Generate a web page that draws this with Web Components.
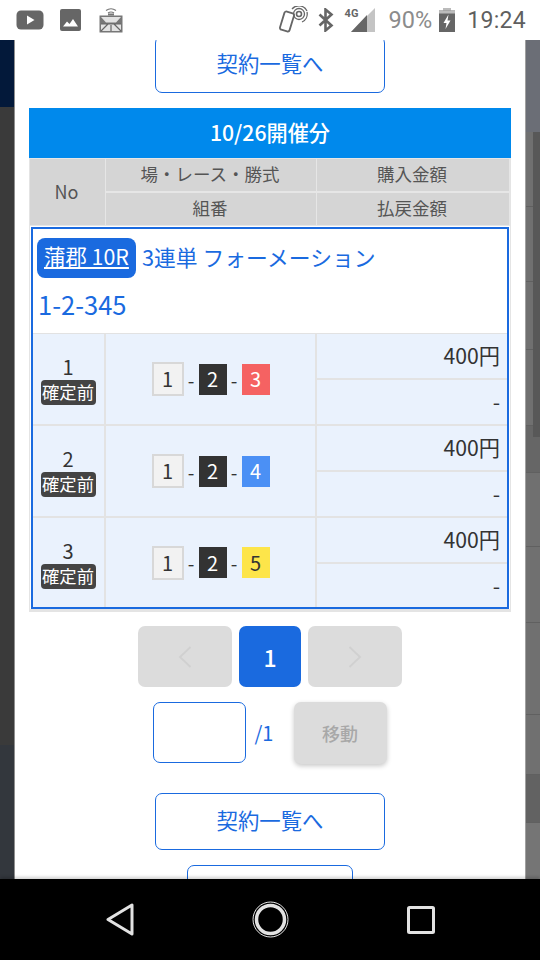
<!DOCTYPE html>
<html lang="ja">
<head>
<meta charset="utf-8">
<title>契約一覧</title>
<style>
html,body{margin:0;padding:0;background:#000;}
body{width:540px;height:960px;overflow:hidden;display:flex;flex-direction:column;font-family:"Noto Sans CJK JP","Noto Sans",sans-serif;}
</style>
</head>
<body>
<status-bar></status-bar>
<modal-screen>
  <action-button style="margin-top:-4px">契約一覧へ</action-button>
  <bet-panel heading="10/26開催分">
    <bet-card venue="蒲郡 10R" kind="3連単 フォーメーション" combo="1-2-345">
      <bet-row no="1" second="2" third="3" amount="400円"></bet-row>
      <bet-row no="2" second="2" third="4" amount="400円"></bet-row>
      <bet-row no="3" second="2" third="5" amount="400円" last></bet-row>
    </bet-card>
  </bet-panel>
  <pager-bar></pager-bar>
  <action-button style="margin-top:29px">契約一覧へ</action-button>
  <action-button narrow style="margin-top:15px"></action-button>
</modal-screen>
<nav-bar></nav-bar>

<script>
const statusTpl = document.createElement('template');
statusTpl.innerHTML = `
<style>
:host{display:flex;flex:0 0 40px;height:40px;background:#fff;align-items:center;justify-content:space-between;padding:0 14px 0 16px;box-sizing:border-box;color:#666;overflow:hidden;position:relative;z-index:1;}
.left,.right{display:flex;align-items:center;}
.right{font-family:Roboto,sans-serif;font-size:23.500px;}
svg{display:block;}
.pct{color:#8c8c8c;margin-left:14px;}
.clock{margin-left:12px;color:#5f5f5f;font-size:23px;letter-spacing:.3px;}
</style>
<div class="left">
  <svg width="28" height="20" viewBox="0 0 28 20"><rect x="0.500" y="0.500" width="27" height="19" rx="4.500" fill="#666"/><path d="M11 5.500v9l7.500-4.500z" fill="#fff"/></svg>
  <svg style="margin-left:16px" width="21" height="22" viewBox="0 0 21 22"><rect width="21" height="22" rx="2" fill="#666"/><path d="M3 17.500l4-5 2.500 2.500 3.500-5 5 7.500z" fill="#fff"/></svg>
  <svg style="margin-left:18px" width="24" height="26" viewBox="0 0 24 26"><path d="M7 3.500q5-3.500 10 0M9 6q3-2 6 0" fill="none" stroke="#777" stroke-width="1.200"/><rect x="9" y="6.500" width="6" height="2" fill="#777"/><rect x="0.500" y="8.500" width="23" height="17" fill="#777"/><path d="M2 10h20l-5 5.500h-10zM2 24v-7h20v7z" fill="#e2e2e2"/><path d="M2 24l7-7M22 24l-7-7M12 18v6M2 17h20" stroke="#666" stroke-width="1.200"/></svg>
</div>
<div class="right">
  <svg width="29" height="28" viewBox="0 0 29 28" fill="none" stroke="#666"><rect x="3" y="6" width="10" height="19" rx="2" stroke-width="1.800" transform="rotate(17 8 15.500)"/><circle cx="20" cy="8" r="2.500" stroke-width="1.600"/><circle cx="20" cy="8" r="5.500" stroke-width="1.300"/><path d="M13 3a9 9 0 0 1 15 2" stroke-width="1.300"/><path d="M28 6a9 9 0 0 1-5 10" stroke-width="1.300"/></svg>
  <svg style="margin-left:10px" width="16" height="24" viewBox="0 0 16 24" fill="none" stroke="#666" stroke-width="2.600"><path d="M1.500 6.500l12 11-6 5v-21l6 5-12 11"/></svg>
  <span style="display:flex;position:relative;width:30px;height:24px;margin-left:11px">
    <svg width="30" height="24" viewBox="0 0 30 24"><path d="M30 0v24H6z" fill="#c4c4c4"/><path d="M22 7v17H6z" fill="#666"/></svg>
    <span style="position:absolute;left:0;top:0;font-size:11px;font-weight:700;line-height:11px;color:#666">4G</span>
  </span>
  <span class="pct">90%</span>
  <svg style="margin-left:7px" width="16" height="24" viewBox="0 0 16 24"><rect x="4" y="0" width="8" height="3" fill="#bbb"/><rect y="2.500" width="16" height="21.500" fill="#666"/><rect y="2.500" width="16" height="3" fill="#bbb"/><path d="M9.500 6.500l-5 8.500h3l-1 6 5-8.500h-3z" fill="#fff"/></svg>
  <span class="clock">19:24</span>
</div>`;
class StatusBar extends HTMLElement{
  constructor(){
    super();
    this.attachShadow({mode:'open'}).appendChild(statusTpl.content.cloneNode(true));
  }
}

const modalTpl = document.createElement('template');
modalTpl.innerHTML = `
<style>
:host{display:flex;flex:0 0 839px;height:839px;overflow:hidden;position:relative;}
.strip{flex:0 0 14px;display:flex;flex-direction:column;position:relative;}
.left{border-right:1px solid #8f8f8f;}
.right{border-left:1px solid #a0a0a0;}
.left div:nth-child(1){flex:0 0 67px;background:#03193a;}
.left div:nth-child(2){flex:0 0 638px;background:#3a3a3a;}
.left div:nth-child(3){flex:1;background:#33373d;}
.right .band{border-bottom:1px solid #606060;background:#707070;}
.right .top{flex:0 0 92px;background:#6b6e76;border:0;}
.right .shade{position:absolute;left:7px;right:0;top:92px;height:305px;background:#585858;}
main{flex:1;min-width:0;background:#fff;display:flex;flex-direction:column;align-items:center;}
</style>
<div class="strip left"><div></div><div></div><div></div></div>
<main><slot></slot></main>
<div class="strip right">
  <div class="band top"></div>
  <div class="band" style="flex:0 0 74px"></div>
  <div class="band" style="flex:0 0 74px"></div>
  <div class="band" style="flex:0 0 67px"></div>
  <div class="band" style="flex:0 0 75px"></div>
  <div class="band" style="flex:0 0 46px;background:#666"></div>
  <div class="band" style="flex:0 0 73px"></div>
  <div class="band" style="flex:0 0 75px"></div>
  <div class="band" style="flex:0 0 91px"></div>
  <div class="band" style="flex:0 0 59px"></div>
  <div class="band" style="flex:0 0 47px;background:#626262"></div>
  <div class="band" style="flex:1;border:0;background:#757575"></div>
  <div class="shade"></div>
</div>`;
class ModalScreen extends HTMLElement{
  constructor(){
    super();
    this.attachShadow({mode:'open'}).appendChild(modalTpl.content.cloneNode(true));
  }
}

const buttonTpl = document.createElement('template');
buttonTpl.innerHTML = `
<style>
:host{display:flex;flex:none;box-sizing:border-box;width:230px;height:57px;border:1.500px solid #1a6adf;border-radius:7px;background:#fff;align-items:center;justify-content:center;color:#1a6adf;font-size:21.400px;line-height:1;padding-bottom:3px;}
:host([narrow]){width:166px;}
</style>
<slot></slot>`;
class ActionButton extends HTMLElement{
  constructor(){
    super();
    this.attachShadow({mode:'open'}).appendChild(buttonTpl.content.cloneNode(true));
  }
}

const panelTpl = document.createElement('template');
panelTpl.innerHTML = `
<style>
:host{display:block;flex:none;width:482px;margin-top:15px;box-sizing:border-box;border:solid #e4e4e4;border-width:0 1px 3px;}
h2{margin:0 -1px;height:50px;box-sizing:border-box;padding-bottom:3px;background:#0089ec;color:#fff;font-size:21.200px;font-weight:500;display:flex;align-items:center;justify-content:center;line-height:1;}
.head{display:grid;grid-template-columns:76px 211px 1fr;grid-template-rows:34px 34px;background:#e4e4e4;gap:0;font-size:17.500px;color:#555;}
.head div{background:#d5d5d5;display:flex;align-items:center;justify-content:center;box-sizing:border-box;padding:0 2px 2px 0;border:solid #e6e6e6;border-width:1px 1px 1px 0;line-height:1;}
.head .no{grid-row:1 / span 2;font-size:18px;}
</style>
<h2></h2>
<div class="head">
  <div class="no">No</div>
  <div>場・レース・勝式</div>
  <div>購入金額</div>
  <div>組番</div>
  <div>払戻金額</div>
</div>
<slot></slot>`;
class BetPanel extends HTMLElement{
  constructor(){
    super();
    this.attachShadow({mode:'open'}).appendChild(panelTpl.content.cloneNode(true));
    this.shadowRoot.querySelector('h2').textContent = this.getAttribute('heading');
  }
}

const cardTpl = document.createElement('template');
cardTpl.innerHTML = `
<style>
:host{display:block;box-sizing:border-box;margin:1px 1px 0;border:2.500px solid #1a6adf;background:#fff;}
.title{height:105px;box-sizing:border-box;padding:9px 0 0 4px;color:#1a6adf;border-bottom:1px solid #e2e2e2;font-size:21.800px;line-height:1;}
.line{display:flex;align-items:center;height:40px;gap:6px;}
a{display:block;background:#1a6adf;color:#fff;border-radius:8px;font-size:21.400px;padding:6px 7px;line-height:24px;height:40px;box-sizing:border-box;text-decoration:underline;text-underline-offset:2px;}
#kind{padding-bottom:3px;}
.combo{font-size:25.500px;margin-top:6px;height:40px;display:flex;align-items:center;padding-left:1px;}
</style>
<div class="title">
  <div class="line"><a id="venue"></a><span id="kind"></span></div>
  <div class="combo" id="combo"></div>
</div>
<slot></slot>`;
class BetCard extends HTMLElement{
  constructor(){
    super();
    this.attachShadow({mode:'open'}).appendChild(cardTpl.content.cloneNode(true));
    for(const key of ['venue','kind','combo']){
      this.shadowRoot.getElementById(key).textContent = this.getAttribute(key);
    }
  }
}

const rowTpl = document.createElement('template');
rowTpl.innerHTML = `
<style>
:host{display:grid;grid-template-columns:73px 211px 1fr;height:92px;background:#eaf2fd;color:#333;border-bottom:2px solid #e3e3e3;box-sizing:border-box;}
:host([last]){height:89px;border-bottom:0;}
.no{border-right:2px solid #e3e3e3;display:flex;flex-direction:column;align-items:center;justify-content:center;font-size:20px;line-height:26px;padding:1px 1px 0 0;}
.tag{background:#444;color:#fff;border-radius:4px;font-size:17.300px;line-height:24px;height:25px;width:55px;text-align:center;white-space:nowrap;}
.combo{border-right:2px solid #e3e3e3;display:flex;align-items:center;justify-content:center;gap:4px;}
.money{display:grid;grid-template-rows:46px 1fr;font-size:21.200px;}
.money div{display:flex;align-items:center;justify-content:flex-end;padding:0 7px 2px 0;line-height:1;box-sizing:border-box;}
.money div:first-child{border-bottom:2px solid #e3e3e3;}
.dash{font-size:19px;width:7px;text-align:center;}
</style>
<div class="no"><span id="no"></span><span class="tag">確定前</span></div>
<div class="combo"><boat-number n="1"></boat-number><span class="dash">-</span><boat-number id="second"></boat-number><span class="dash">-</span><boat-number id="third"></boat-number></div>
<div class="money"><div id="amount"></div><div>-</div></div>`;
class BetRow extends HTMLElement{
  constructor(){
    super();
    this.attachShadow({mode:'open'}).appendChild(rowTpl.content.cloneNode(true));
    const root = this.shadowRoot;
    root.getElementById('no').textContent = this.getAttribute('no');
    root.getElementById('amount').textContent = this.getAttribute('amount');
    root.getElementById('second').setAttribute('n', this.getAttribute('second'));
    root.getElementById('third').setAttribute('n', this.getAttribute('third'));
  }
}

const boatColors = {
  1:['#f2f2f2','#333'],
  2:['#333','#fff'],
  3:['#f56262','#fff'],
  4:['#4b90f5','#fff'],
  5:['#fde54a','#333']
};
class BoatNumber extends HTMLElement{
  static get observedAttributes(){ return ['n']; }
  constructor(){
    super();
    this.attachShadow({mode:'open'}).innerHTML = `
<style>
:host{display:flex;flex:none;width:28px;height:31px;align-items:center;justify-content:center;font-size:20px;line-height:1;box-sizing:border-box;}
:host([n="1"]){width:32px;height:34px;border:2px solid #d8d8d8;}
</style>
<span></span>`;
  }
  attributeChangedCallback(name, old, val){
    const c = boatColors[val];
    this.style.background = c[0];
    this.style.color = c[1];
    this.shadowRoot.querySelector('span').textContent = val;
  }
}

const pagerTpl = document.createElement('template');
pagerTpl.innerHTML = `
<style>
:host{display:flex;flex:none;flex-direction:column;align-items:center;margin-top:14px;}
.pages,.jump{display:flex;}
.pages{gap:7px;}
.pages div{height:61px;border-radius:7px;background:#dcdcdc;display:flex;align-items:center;justify-content:center;box-sizing:border-box;}
.wide{width:94px;}
.cur{width:62px;background:#1a6adf !important;color:#fff;font-size:23px;font-weight:500;}
.jump{margin-top:15px;width:234px;align-items:flex-start;margin-left:-1px;}
.box{width:93px;height:61px;box-sizing:border-box;border:1.500px solid #1a6adf;border-radius:7px;background:#fff;}
.of{width:48px;height:61px;padding-left:9px;box-sizing:border-box;display:flex;align-items:center;color:#1a6adf;font-size:20px;}
.go{width:93px;height:62px;border-radius:7px;background:#dcdcdc;color:#a8a8a8;font-size:18px;font-weight:500;display:flex;align-items:center;justify-content:center;box-shadow:0 2px 5px rgba(0,0,0,.22);}
svg{display:block;}
</style>
<div class="pages">
  <div class="wide"><svg width="14" height="24" viewBox="0 0 14 24" fill="none" stroke="#d0d0d0" stroke-width="1.800"><path d="M12.500 2L2 12l10.500 10"/></svg></div>
  <div class="cur">1</div>
  <div class="wide"><svg width="14" height="24" viewBox="0 0 14 24" fill="none" stroke="#d0d0d0" stroke-width="1.800"><path d="M1.500 2L12 12 1.500 22"/></svg></div>
</div>
<div class="jump">
  <div class="box"></div>
  <div class="of">/1</div>
  <div class="go">移動</div>
</div>`;
class PagerBar extends HTMLElement{
  constructor(){
    super();
    this.attachShadow({mode:'open'}).appendChild(pagerTpl.content.cloneNode(true));
  }
}

const navTpl = document.createElement('template');
navTpl.innerHTML = `
<style>
:host{display:flex;flex:0 0 81px;height:81px;background:#000;align-items:center;justify-content:center;gap:118px;box-sizing:border-box;position:relative;z-index:1;box-shadow:0 -2px 3px rgba(0,0,0,.18);}
svg{display:block;}
</style>
<svg width="28" height="33" viewBox="0 0 28 33" fill="none" stroke="#e2e2e2" stroke-width="3" stroke-linejoin="round"><path d="M26 2v29L2 16.500z"/></svg>
<svg width="37" height="37" viewBox="0 0 37 37" fill="none"><circle cx="18.500" cy="18.500" r="17.500" stroke="#e6e6e6" stroke-width="1"/><circle cx="18.500" cy="18.500" r="14" stroke="#e2e2e2" stroke-width="3.500"/></svg>
<svg width="28" height="28" viewBox="0 0 28 28" fill="none" stroke="#e2e2e2" stroke-width="3" stroke-linejoin="round"><rect x="1.500" y="1.500" width="25" height="25" rx="1"/></svg>`;
class NavBar extends HTMLElement{
  constructor(){
    super();
    this.attachShadow({mode:'open'}).appendChild(navTpl.content.cloneNode(true));
  }
}

customElements.define('boat-number',BoatNumber);
customElements.define('status-bar',StatusBar);
customElements.define('modal-screen',ModalScreen);
customElements.define('action-button',ActionButton);
customElements.define('bet-panel',BetPanel);
customElements.define('bet-card',BetCard);
customElements.define('bet-row',BetRow);
customElements.define('pager-bar',PagerBar);
customElements.define('nav-bar',NavBar);
</script>
</body>
</html>
